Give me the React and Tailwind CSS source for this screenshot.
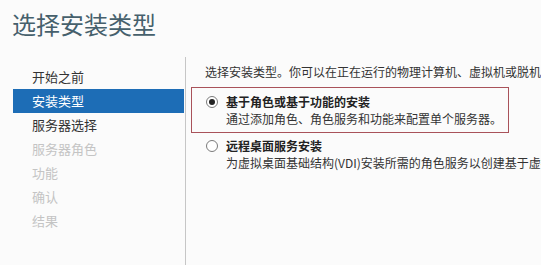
import React from 'react';

const steps = [
  { label: '开始之前', state: 'done' },
  { label: '安装类型', state: 'active' },
  { label: '服务器选择', state: 'done' },
  { label: '服务器角色', state: 'off' },
  { label: '功能', state: 'off' },
  { label: '确认', state: 'off' },
  { label: '结果', state: 'off' },
];

function Radio({ checked }) {
  return (
    <span className="w-[12px] h-[12px] rounded-full border border-[#7a7a7a] bg-white flex items-center justify-center shrink-0">
      {checked && <span className="w-[6px] h-[6px] rounded-full bg-[#222]" />}
    </span>
  );
}

export default function App() {
  return (
    <div
      className="w-[541px] h-[265px] overflow-hidden bg-[#fbfbfb] flex flex-col"
      style={{ fontFamily: '"Microsoft YaHei", "Noto Sans CJK SC", sans-serif' }}
    >
      {/* header */}
      <h1 className="pl-[12px] pt-[8px] h-[57px] text-[24px] leading-[32px] text-[#46606c] font-normal">
        选择安装类型
      </h1>

      <div className="flex flex-1 min-h-0">
        {/* wizard steps */}
        <div className="w-[185px] shrink-0 pl-[13px] pr-px pt-[8px] flex flex-col">
          {steps.map((s) => (
            <div
              key={s.label}
              className={
                'h-[24px] pl-[19px] flex items-center text-[13px] ' +
                (s.state === 'active'
                  ? 'bg-[#1d6db6] text-white'
                  : s.state === 'done'
                  ? 'text-[#333]'
                  : 'text-[#c4c4c4]')
              }
            >
              {s.label}
            </div>
          ))}
        </div>

        <div className="w-px bg-[#c6c6c6] shrink-0" />

        {/* content */}
        <div className="flex-1 min-w-0 overflow-hidden pl-[5px] pt-[7px] text-[12px] text-[#333] whitespace-nowrap">
          <p className="pl-[14px] leading-[16px]">选择安装类型。你可以在正在运行的物理计算机、虚拟机或脱机虚拟硬盘(VHD)上安装。</p>

          <div className="mt-[7px] w-[318px] border border-[#a9525a] pt-[6px] pb-[5px] pl-[14px]">
            <div className="flex items-center gap-[8px] leading-[16px]">
              <Radio checked />
              <span className="font-bold text-[#222]">基于角色或基于功能的安装</span>
            </div>
            <p className="pl-[20px] mt-[1px] leading-[16px]">通过添加角色、角色服务和功能来配置单个服务器。</p>
          </div>

          <div className="mt-[5px] pl-[15px]">
            <div className="flex items-center gap-[8px] leading-[16px]">
              <Radio />
              <span className="font-bold text-[#222]">远程桌面服务安装</span>
            </div>
            <p className="pl-[20px] mt-[1px] leading-[16px]">为虚拟桌面基础结构(VDI)安装所需的角色服务以创建基于虚拟机或基于会话的桌面部署。</p>
          </div>
        </div>
      </div>
    </div>
  );
}
